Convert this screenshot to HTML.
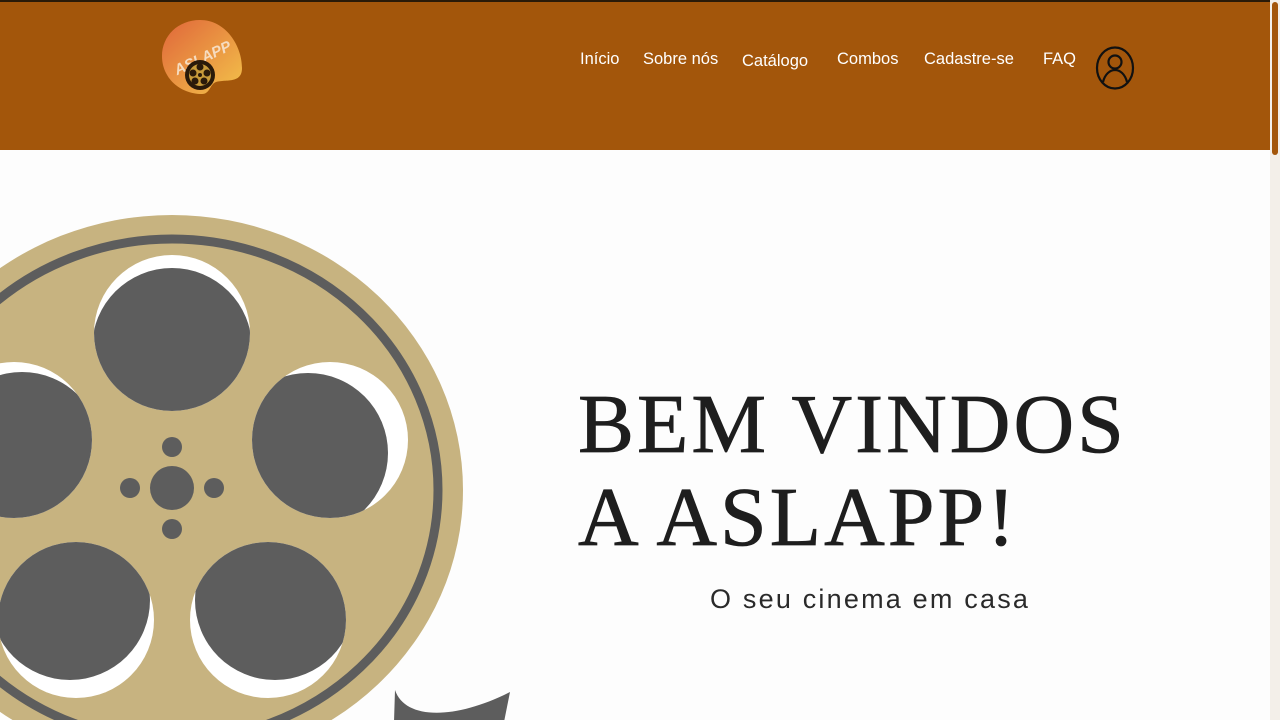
<!DOCTYPE html>
<html><head><meta charset="utf-8"><style>
html,body{margin:0;padding:0;width:1280px;height:720px;overflow:hidden;background:#fdfdfd;font-family:"Liberation Sans",sans-serif;position:relative}
header{position:absolute;left:0;top:0;width:1270px;height:150px;background:#a3560b;border-top:2px solid #2a1a08;box-sizing:border-box}
.nav a{position:absolute;top:48px;color:#fff;font-size:16.5px;text-decoration:none;letter-spacing:0}
.sb{position:absolute;right:0;top:0;width:10px;height:720px;background:#f3efe9}
.sb i{position:absolute;left:2px;top:2px;width:6px;height:153px;background:#a3560b;border-radius:3px}
h1{position:absolute;left:578px;top:378px;margin:0;font-family:"Liberation Serif",serif;font-weight:normal;font-size:84px;line-height:93px;color:#1e1e1e;letter-spacing:3px;white-space:nowrap;-webkit-text-stroke:0.8px #1e1e1e}
.sub{position:absolute;left:710px;top:584px;font-size:27px;color:#2a2a2a;letter-spacing:2.2px;white-space:nowrap}
</style></head><body>
<header>
<svg style="position:absolute;left:160px;top:16px" width="86" height="80" viewBox="0 0 86 80">
<defs><linearGradient id="g" x1="0" y1="0" x2="1" y2="1"><stop offset="0" stop-color="#e0663a"/><stop offset="1" stop-color="#f3c24a"/></linearGradient></defs>
<path d="M40 2C18 2 2 18 2 38c0 22 18 38 40 38 8 0 8-10 14-12 10-3 26 2 26-14C82 28 66 2 40 2z" fill="url(#g)"/>
<text x="12" y="46" font-family="Liberation Sans" font-weight="bold" font-style="italic" font-size="15" fill="#f6dcc0" transform="rotate(-25 40 40)">ASLAPP</text>
<circle cx="40" cy="57" r="15" fill="#2a1a0a"/><circle cx="40" cy="57" r="11" fill="#c79a3a"/>
<circle cx="40" cy="49" r="3.5" fill="#2a1a0a"/><circle cx="47" cy="55" r="3.5" fill="#2a1a0a"/><circle cx="44" cy="63" r="3.5" fill="#2a1a0a"/><circle cx="35" cy="63" r="3.5" fill="#2a1a0a"/><circle cx="33" cy="55" r="3.5" fill="#2a1a0a"/><circle cx="40" cy="57" r="2" fill="#2a1a0a"/>
</svg>
<div class="nav">
<a style="left:580px">Início</a><a style="left:643px">Sobre nós</a><a style="left:742px;top:50px">Catálogo</a><a style="left:837px">Combos</a><a style="left:924px">Cadastre-se</a><a style="left:1043px">FAQ</a>
</div>
<svg style="position:absolute;left:1095px;top:44px" width="42" height="46" viewBox="0 0 42 46"><ellipse cx="20" cy="22" rx="18" ry="20.5" fill="none" stroke="#111" stroke-width="2.2"/><circle cx="20" cy="16" r="6.5" fill="none" stroke="#111" stroke-width="2.2"/><path d="M8 36c2-8 7-12 12-12s10 4 12 12" fill="none" stroke="#111" stroke-width="2.2"/></svg>
</header>
<div class="sb"><i></i></div>
<svg style="position:absolute;left:0;top:150px" width="560" height="570" viewBox="0 150 560 570">
<defs>
<clipPath id="h1"><circle cx="172" cy="333" r="78"/></clipPath>
<clipPath id="h2"><circle cx="330" cy="440" r="78"/></clipPath>
<clipPath id="h3"><circle cx="268" cy="620" r="78"/></clipPath>
<clipPath id="h4"><circle cx="76" cy="620" r="78"/></clipPath>
<clipPath id="h5"><circle cx="14" cy="440" r="78"/></clipPath>
</defs>
<path d="M395 690c10 30 60 30 115 2l-6 30h-110z" fill="#5d5d5d"/>
<ellipse cx="172" cy="490" rx="291" ry="275" fill="#c7b380"/>
<ellipse cx="172" cy="490" rx="266" ry="251" fill="none" stroke="#5d5d5d" stroke-width="9"/>
<g fill="#fff"><circle cx="172" cy="333" r="78"/><circle cx="330" cy="440" r="78"/><circle cx="268" cy="620" r="78"/><circle cx="76" cy="620" r="78"/><circle cx="14" cy="440" r="78"/></g>
<g fill="#5d5d5d">
<circle cx="172" cy="348" r="80" clip-path="url(#h1)"/>
<circle cx="308" cy="453" r="80" clip-path="url(#h2)"/>
<circle cx="275" cy="600" r="80" clip-path="url(#h3)"/>
<circle cx="70" cy="600" r="80" clip-path="url(#h4)"/>
<circle cx="22" cy="452" r="80" clip-path="url(#h5)"/>
<circle cx="172" cy="488" r="22"/><circle cx="172" cy="447" r="10"/><circle cx="172" cy="529" r="10"/><circle cx="130" cy="488" r="10"/><circle cx="214" cy="488" r="10"/>
</g>
</svg>
<h1>BEM VINDOS<br>A ASLAPP!</h1>
<div class="sub">O seu cinema em casa</div>
</body></html>
